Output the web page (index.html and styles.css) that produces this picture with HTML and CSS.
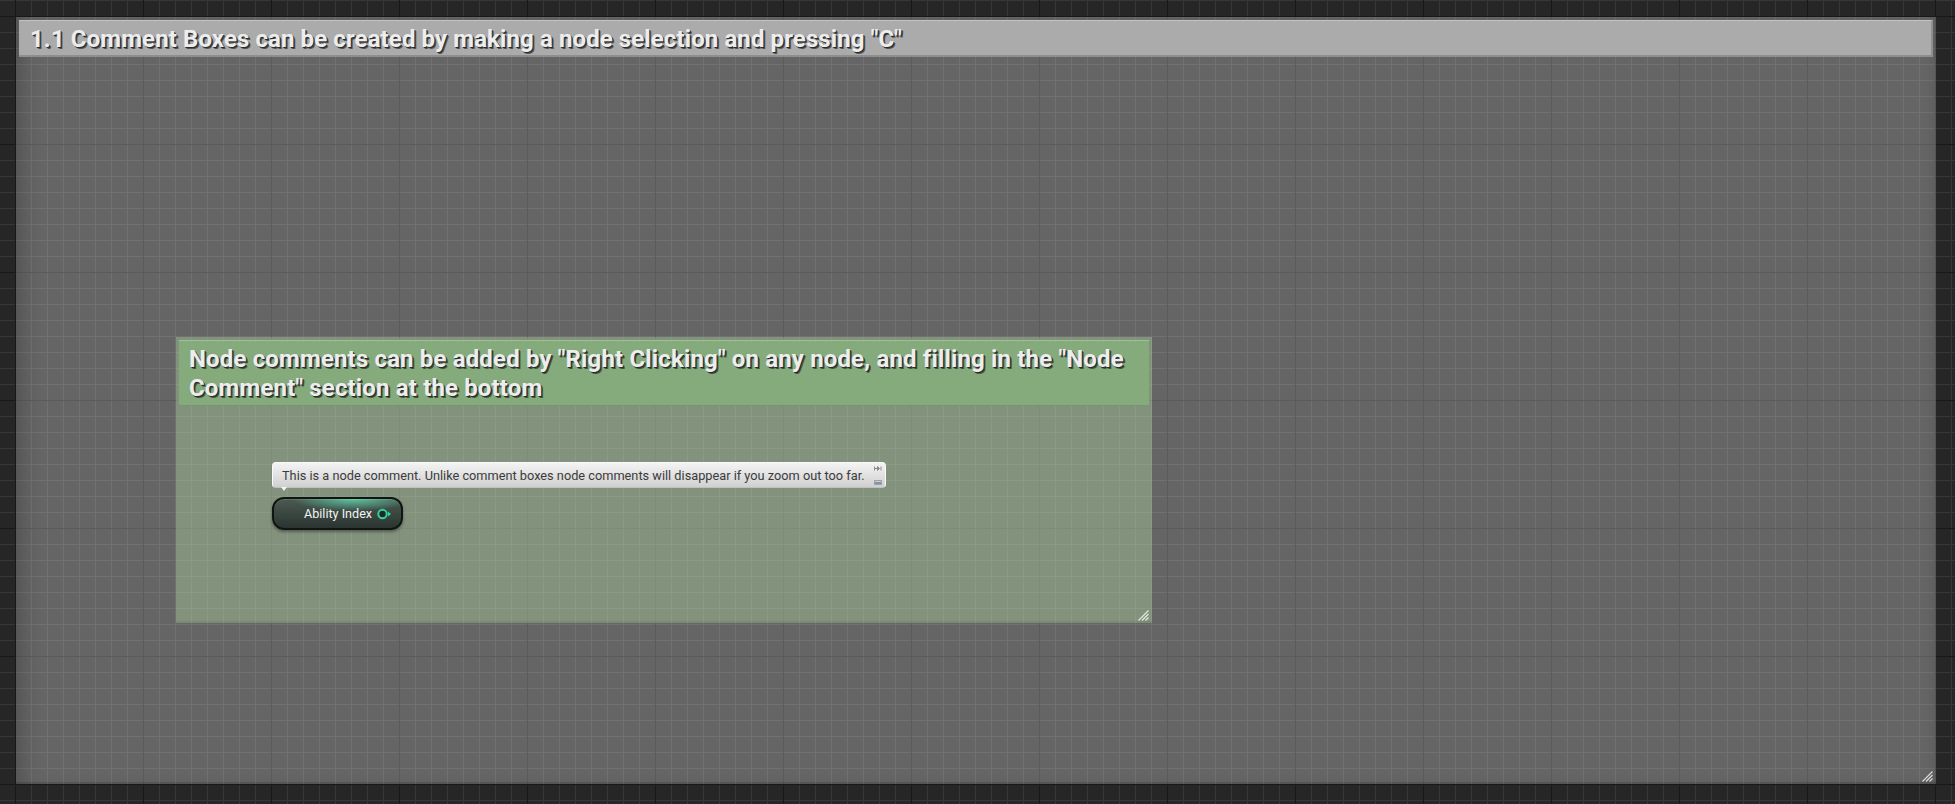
FILE: index.html
```html
<!DOCTYPE html>
<html>
<head>
<meta charset="utf-8">
<link rel="stylesheet" href="styles.css">
</head>
<body>
<div class="canvas">
  <div class="comment outer">
    <div class="comment-title outer-title">1.1 Comment Boxes can be created by making a node selection and pressing "C"</div>
    <div class="comment-body">
      <div class="comment inner">
        <div class="comment-title inner-title">Node comments can be added by "Right Clicking" on any node, and filling in the "Node Comment" section at the bottom</div>
        <div class="comment-body">
          <div class="bubble">
            <span class="bubble-text">This is a node comment. Unlike comment boxes node comments will disappear if you zoom out too far.</span>
            <div class="bubble-icons">
              <svg class="pin-icon" width="8" height="5" viewBox="0 0 8 5"><path d="M0.5 0.5v4M1 2.5h2.5M3.5 0.5l2 2-2 2z M7 0.5v4" stroke="#8a8a8a" stroke-width="1" fill="#8a8a8a"/></svg>
              <svg class="pin-icon" width="8" height="5" viewBox="0 0 8 5"><rect x="0.5" y="0.5" width="7" height="4" fill="#c8ccd4" stroke="#9aa2b0"/><rect x="1.5" y="2" width="1" height="2" fill="#556"/><rect x="3.5" y="2" width="1" height="2" fill="#556"/><rect x="5.5" y="2" width="1" height="2" fill="#556"/></svg>
            </div>
            <span class="bubble-tail"></span>
          </div>
          <div class="node">
            <span class="node-label">Ability Index</span>
            <svg class="node-pin" width="15" height="12" viewBox="0 0 15 12"><circle cx="5.5" cy="6" r="4.2" fill="#1f2a26" stroke="#2fd3a3" stroke-width="2"/><path d="M11 3.5 L14 6 L11 8.5 Z" fill="#2fd3a3"/></svg>
          </div>
        </div>
        <svg class="grip" width="12" height="12" viewBox="0 0 12 12"><path d="M11.5 1.5L1.5 11.5M11.5 5L5 11.5M11.5 8.5L8.5 11.5" stroke="#e4ece1" stroke-width="1.1"/></svg>
      </div>
    </div>
    <svg class="grip" width="12" height="12" viewBox="0 0 12 12"><path d="M11.5 1.5L1.5 11.5M11.5 5L5 11.5M11.5 8.5L8.5 11.5" stroke="#dcdcdc" stroke-width="1.1"/></svg>
  </div>
</div>
</body>
</html>
```

FILE: styles.css
```css
html, body {
  margin: 0;
  padding: 0;
}
body {
  width: 1955px;
  height: 804px;
  overflow: hidden;
  background-color: #262626;
  background-image:
    linear-gradient(to right, #181818 1px, transparent 1px),
    linear-gradient(to bottom, #181818 1px, transparent 1px),
    linear-gradient(to right, #373737 1px, transparent 1px),
    linear-gradient(to bottom, #373737 1px, transparent 1px);
  background-size: 128px 128px, 128px 128px, 16px 16px, 16px 16px;
  background-position: 15px 16px, 15px 16px, 15px 16px, 15px 16px;
  font-family: Roboto, "Liberation Sans", sans-serif;
}
.canvas {
  position: relative;
  width: 1955px;
  height: 804px;
}
.comment {
  position: absolute;
  display: flex;
  flex-direction: column;
  box-sizing: border-box;
}
.outer {
  left: 16px;
  top: 17px;
  width: 1920px;
  height: 767px;
  background: rgba(255, 255, 255, 0.295);
  box-shadow: inset 0 -2px 0 rgba(0,0,0,0.12), inset 16px 0 20px -10px rgba(0,0,0,0.2), inset -10px 0 14px -10px rgba(0,0,0,0.15);
}
.comment-title {
  margin: 3px 3px 0 3px;
  color: #ededed;
  font-weight: 700;
  text-shadow: 1px 1px 0 #2a2a2a, 2px 2px 0 rgba(0,0,0,0.5);
  box-sizing: border-box;
  flex: none;
}
.outer-title {
  height: 37px;
  line-height: 37px;
  font-size: 24px;
  letter-spacing: 0.1px;
  padding-left: 11px;
  background: #ababab;
  border-top: 1px solid #c2c2c2;
  border-right: 2px solid #8e8e8e;
  border-bottom: 2px solid #8e8e8e;
}
.comment-body {
  position: relative;
  flex: 1;
}
.inner {
  left: 160px;
  top: 280px;
  width: 976px;
  height: 286px;
  background: rgba(190, 233, 173, 0.35);
  box-shadow: inset 0 -2px 0 rgba(0,0,0,0.06);
}
.inner-title {
  height: 66px;
  font-size: 24px;
  letter-spacing: 0.15px;
  line-height: 29px;
  padding: 4px 20px 0 10px;
  background: #85aa7c;
  border-top: 1px solid #9cc192;
  border-bottom: 1px solid #76976e;
}
.bubble {
  position: absolute;
  left: 96px;
  top: 56px;
  width: 614px;
  height: 26px;
  box-sizing: border-box;
  border-radius: 4px;
  background: linear-gradient(to bottom, #f4f4f4 0%, #e2e2e2 50%, #cfd0cf 100%);
  border: 1px solid #fafafa;
  border-bottom-color: #c0c0c0;
  display: flex;
  align-items: center;
  padding-left: 9px;
}
.bubble-text {
  font-size: 12.75px;
  color: #3b3b3b;
  white-space: nowrap;
}
.bubble-icons {
  position: absolute;
  right: 3px;
  top: 3px;
  display: flex;
  flex-direction: column;
  gap: 9px;
}
.pin-icon {
  display: block;
}
.bubble-tail {
  position: absolute;
  left: 8px;
  bottom: -4px;
  width: 0;
  height: 0;
  border-left: 3px solid transparent;
  border-right: 3px solid transparent;
  border-top: 4px solid #f4f4f4;
}
.node {
  position: absolute;
  left: 96px;
  top: 91px;
  width: 131px;
  height: 33px;
  box-sizing: border-box;
  border-radius: 12px;
  border: 2px solid #111512;
  background:
    radial-gradient(ellipse 60px 12px at 62% 0%, rgba(96, 214, 174, 0.85), rgba(96, 214, 174, 0) 100%),
    linear-gradient(to bottom, #4a5a53 0%, #3a4740 50%, #2b3430 100%);
  box-shadow: inset 0 1px 0 rgba(255,255,255,0.12), 0 2px 3px rgba(0,0,0,0.35);
  display: flex;
  align-items: center;
  padding-left: 30px;
  gap: 5px;
}
.node-label {
  color: #f2f2f2;
  font-size: 12.6px;
  white-space: nowrap;
}
.node-pin {
  display: block;
}
.grip {
  position: absolute;
  right: 3px;
  bottom: 2px;
}
```
